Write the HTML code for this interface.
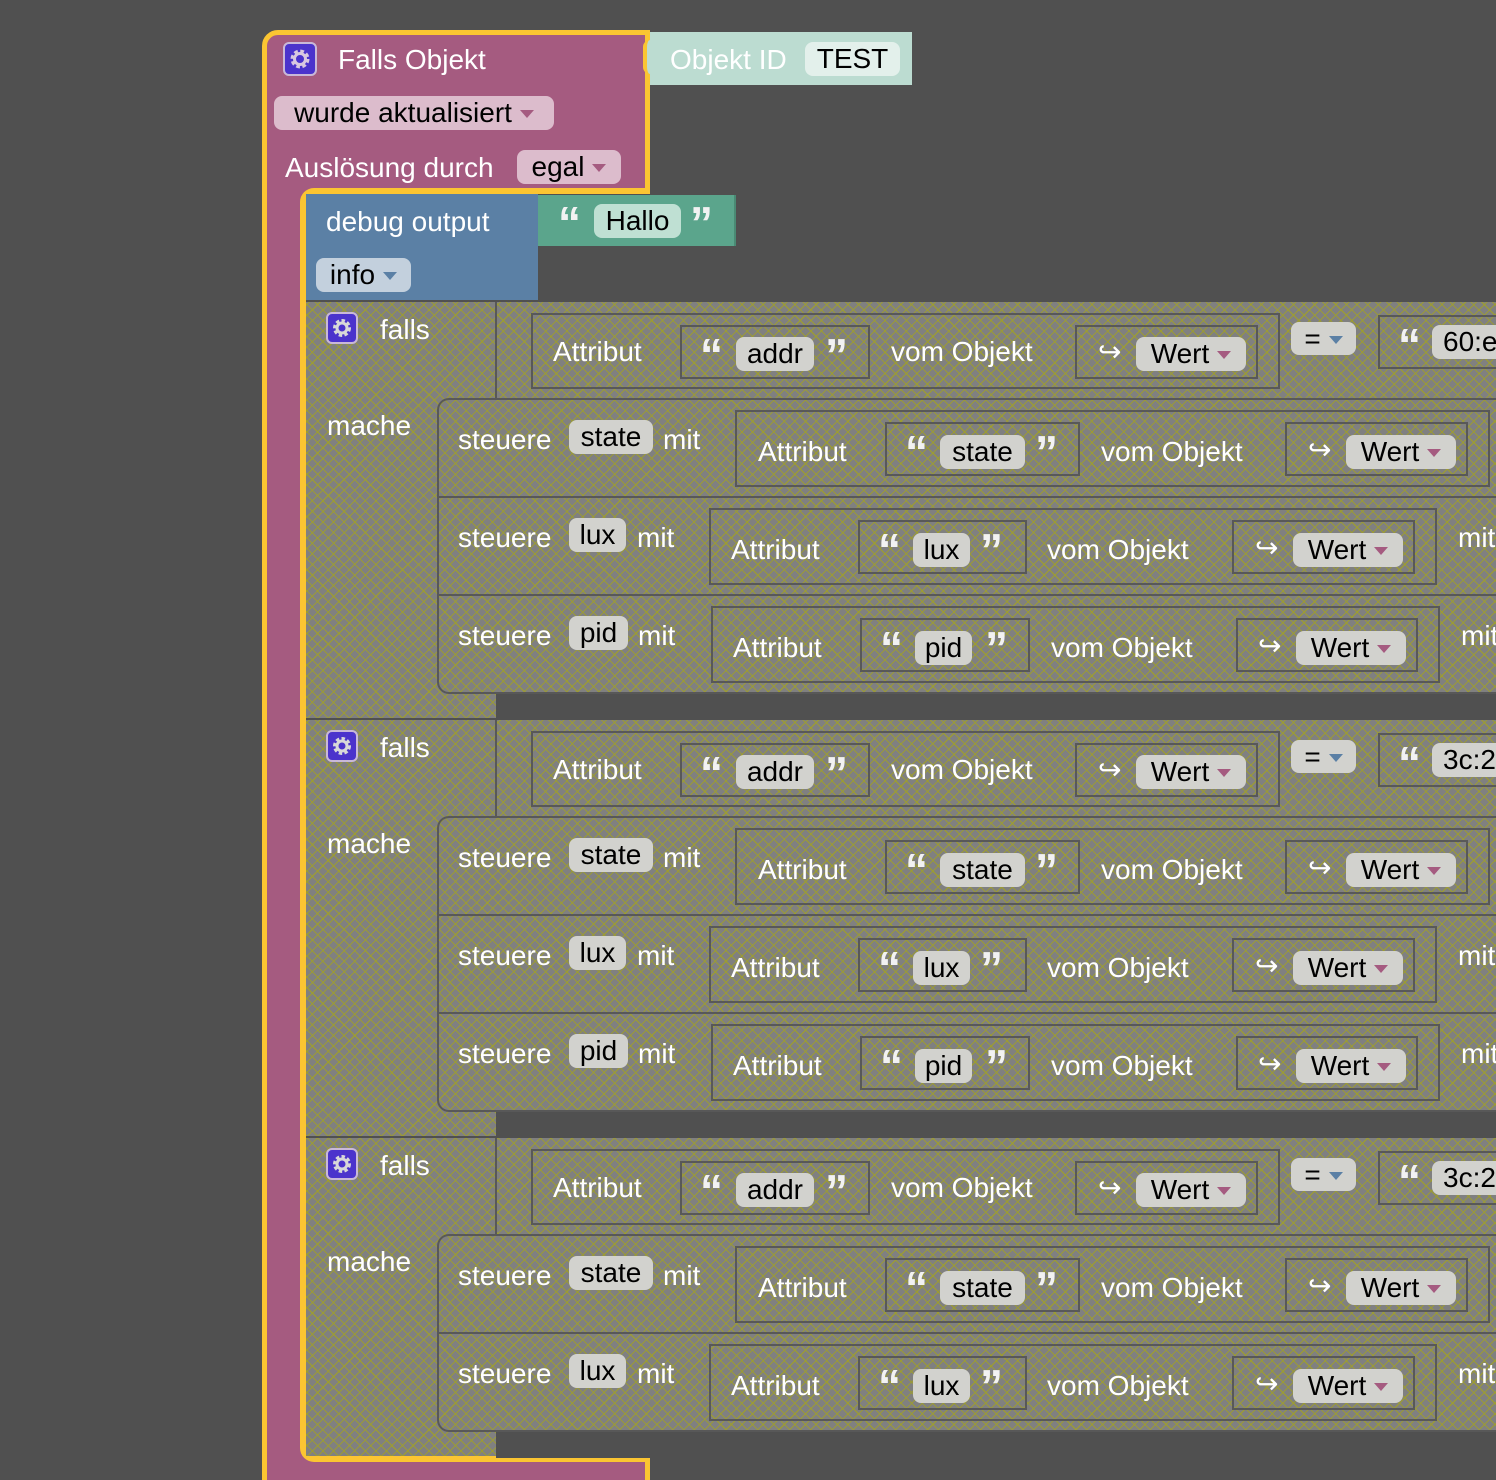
<!DOCTYPE html>
<html><head><meta charset="utf-8"><style>
*{margin:0;padding:0;box-sizing:border-box}
html,body{width:1496px;height:1480px;overflow:hidden}
body{background:#505050;position:relative;font-family:"Liberation Sans",sans-serif}
div,span.a{position:absolute}
.t{position:absolute;font-size:28px;line-height:34px;color:#fff;white-space:nowrap}
.p{position:absolute;height:34px;border-radius:8px;background:#d2d2ce;color:#000;font-size:28px;line-height:34px;text-align:center;white-space:nowrap}
.q{position:absolute;font-family:"Liberation Sans",sans-serif;font-weight:bold;font-size:46px;line-height:46px;color:#f2f2f2;letter-spacing:-2px}
.pat{background-color:#808080;background-image:repeating-linear-gradient(45deg,rgba(160,160,40,.8) 0 1.1px,transparent 1.1px 7.5px),repeating-linear-gradient(-45deg,rgba(160,160,40,.8) 0 1.1px,transparent 1.1px 7.5px)}
.bx{position:absolute;border:2px solid #585858}
.ln{position:absolute;background:#585858}
.dk{position:absolute;background:#505050}
.ar{display:inline-block;width:0;height:0;border-left:7px solid transparent;border-right:7px solid transparent;border-top:8px solid #a55b80;vertical-align:middle;margin-left:8px;margin-top:-2px}
.ab{border-top-color:#5b80a5}
.g{position:absolute;width:32px;height:32px;border-radius:6px;background:#4b33cc;border:2px solid #c9b8d8}
</style></head><body>

<!-- outer purple block -->
<div style="left:262px;top:30px;width:388px;height:1470px;background:#a55b80;border:5px solid #fbc532;border-top-left-radius:16px"></div>
<div style="left:300px;top:188px;width:350px;height:1274px;background:#505050;border:6px solid #fbc532;border-right:none;border-radius:14px 0 0 14px"></div>
<div class="g" style="left:283px;top:42px;width:34px;height:34px"><svg width="30" height="30" viewBox="0 0 30 30"><circle cx="15" cy="15" r="7" fill="none" stroke="#d8c8e0" stroke-width="5" stroke-dasharray="3.3 2.2"/><circle cx="15" cy="15" r="5.5" fill="none" stroke="#d8c8e0" stroke-width="3"/></svg></div>
<div class="t" style="left:338px;top:43px">Falls Objekt</div>
<div class="p" style="left:274px;top:96px;width:280px;background:#dcbccc">wurde aktualisiert<span class="ar"></span></div>
<div class="t" style="left:285px;top:151px">Auslösung durch</div>
<div class="p" style="left:517px;top:150px;width:104px;background:#dcbccc">egal<span class="ar"></span></div>

<!-- Objekt ID -->
<div style="left:650px;top:32px;width:262px;height:53px;background:#bcdcd1"></div>
<div style="left:643px;top:40px;width:14px;height:34px;background:#bcdcd1;border-radius:7px 0 0 7px;border-left:4px solid #fbc532"></div>
<div class="t" style="left:670px;top:43px">Objekt ID</div>
<div class="p" style="left:805px;top:42px;width:95px;background:#e3f0eb">TEST</div>

<!-- debug -->
<div style="left:306px;top:194px;width:232px;height:106px;background:#5b80a5"></div>
<div class="t" style="left:326px;top:205px">debug output</div>
<div class="p" style="left:316px;top:258px;width:95px;background:#c3d0dd">info<span class="ar ab"></span></div>
<div style="left:538px;top:195px;width:198px;height:51px;background:#5ba58c;border-right:2px solid #4a8a74"></div>
<div class="q" style="left:558px;top:200px">“</div>
<div class="p" style="left:594px;top:204px;width:87px;background:#bfe0d3">Hallo</div>
<div class="q" style="left:690px;top:200px">”</div>

<!-- GROUP 1 -->
<div class="pat" style="left:306px;top:302px;width:1190px;height:416px"></div>
<div class="dk" style="left:496px;top:692px;width:1000px;height:28px"></div>
<div class="ln" style="left:495px;top:302px;width:2px;height:96px"></div>
<div class="bx" style="left:437px;top:398px;width:1100px;height:296px;border-right:none;border-radius:12px 0 0 12px"></div>
<div class="ln" style="left:437px;top:496px;width:1059px;height:2px"></div>
<div class="ln" style="left:437px;top:594px;width:1059px;height:2px"></div>
<div class="g" style="left:326px;top:312px"><svg width="28" height="28" viewBox="0 0 28 28"><circle cx="14" cy="14" r="6.5" fill="none" stroke="#d8d8d8" stroke-width="5" stroke-dasharray="3 2"/><circle cx="14" cy="14" r="5" fill="none" stroke="#d8d8d8" stroke-width="3"/></svg></div>
<div class="t" style="left:380px;top:313px">falls</div>
<div class="t" style="left:327px;top:409px">mache</div>
<div class="bx" style="left:531px;top:313px;width:749px;height:76px"></div>
<div class="t" style="left:553px;top:335px">Attribut</div>
<div class="bx" style="left:680px;top:325px;width:190px;height:54px"></div>
<div class="q" style="left:700px;top:332px">“</div><div class="p" style="left:736px;top:337px;width:78px">addr</div><div class="q" style="left:825px;top:332px">”</div>
<div class="t" style="left:891px;top:335px">vom Objekt</div>
<div class="bx" style="left:1075px;top:325px;width:183px;height:54px"></div>
<div class="t" style="left:1098px;top:335px">↪</div><div class="p" style="left:1136px;top:337px;width:110px">Wert<span class="ar"></span></div>
<div class="p" style="left:1291px;top:322px;width:65px;height:33px;line-height:33px">=<span class="ar ab"></span></div>
<div class="bx" style="left:1378px;top:315px;width:200px;height:54px"></div>
<div class="q" style="left:1398px;top:322px">“</div><div class="p" style="left:1432px;top:325px;width:100px;text-align:left;padding-left:11px">60:e</div>
<!-- rows -->
<div class="t" style="left:458px;top:423px">steuere</div><div class="p" style="left:569px;top:420px;width:84px">state</div><div class="t" style="left:663px;top:423px">mit</div>
<div class="bx" style="left:735px;top:410px;width:755px;height:77px"></div>
<div class="t" style="left:758px;top:435px">Attribut</div>
<div class="bx" style="left:885px;top:422px;width:195px;height:54px"></div>
<div class="q" style="left:905px;top:429px">“</div><div class="p" style="left:940px;top:435px;width:85px">state</div><div class="q" style="left:1035px;top:429px">”</div>
<div class="t" style="left:1101px;top:435px">vom Objekt</div>
<div class="bx" style="left:1285px;top:422px;width:183px;height:54px"></div>
<div class="t" style="left:1308px;top:433px">↪</div><div class="p" style="left:1346px;top:435px;width:110px">Wert<span class="ar"></span></div>

<div class="t" style="left:458px;top:521px">steuere</div><div class="p" style="left:569px;top:518px;width:57px">lux</div><div class="t" style="left:637px;top:521px">mit</div>
<div class="bx" style="left:709px;top:508px;width:728px;height:77px"></div>
<div class="t" style="left:731px;top:533px">Attribut</div>
<div class="bx" style="left:858px;top:520px;width:169px;height:54px"></div>
<div class="q" style="left:878px;top:527px">“</div><div class="p" style="left:913px;top:533px;width:57px">lux</div><div class="q" style="left:980px;top:527px">”</div>
<div class="t" style="left:1047px;top:533px">vom Objekt</div>
<div class="bx" style="left:1232px;top:520px;width:183px;height:54px"></div>
<div class="t" style="left:1255px;top:531px">↪</div><div class="p" style="left:1293px;top:533px;width:110px">Wert<span class="ar"></span></div>
<div class="t" style="left:1458px;top:521px">mit</div>

<div class="t" style="left:458px;top:619px">steuere</div><div class="p" style="left:569px;top:616px;width:59px">pid</div><div class="t" style="left:638px;top:619px">mit</div>
<div class="bx" style="left:711px;top:606px;width:729px;height:77px"></div>
<div class="t" style="left:733px;top:631px">Attribut</div>
<div class="bx" style="left:860px;top:618px;width:170px;height:54px"></div>
<div class="q" style="left:880px;top:625px">“</div><div class="p" style="left:915px;top:631px;width:57px">pid</div><div class="q" style="left:985px;top:625px">”</div>
<div class="t" style="left:1051px;top:631px">vom Objekt</div>
<div class="bx" style="left:1236px;top:618px;width:182px;height:54px"></div>
<div class="t" style="left:1258px;top:629px">↪</div><div class="p" style="left:1296px;top:631px;width:110px">Wert<span class="ar"></span></div>
<div class="t" style="left:1461px;top:619px">mit</div>

<!-- GROUP 2 -->
<div class="pat" style="left:306px;top:720px;width:1190px;height:416px"></div>
<div class="dk" style="left:496px;top:1110px;width:1000px;height:28px"></div>
<div class="ln" style="left:495px;top:720px;width:2px;height:96px"></div>
<div class="bx" style="left:437px;top:816px;width:1100px;height:296px;border-right:none;border-radius:12px 0 0 12px"></div>
<div class="ln" style="left:437px;top:914px;width:1059px;height:2px"></div>
<div class="ln" style="left:437px;top:1012px;width:1059px;height:2px"></div>
<div class="g" style="left:326px;top:730px"><svg width="28" height="28" viewBox="0 0 28 28"><circle cx="14" cy="14" r="6.5" fill="none" stroke="#d8d8d8" stroke-width="5" stroke-dasharray="3 2"/><circle cx="14" cy="14" r="5" fill="none" stroke="#d8d8d8" stroke-width="3"/></svg></div>
<div class="t" style="left:380px;top:731px">falls</div>
<div class="t" style="left:327px;top:827px">mache</div>
<div class="bx" style="left:531px;top:731px;width:749px;height:76px"></div>
<div class="t" style="left:553px;top:753px">Attribut</div>
<div class="bx" style="left:680px;top:743px;width:190px;height:54px"></div>
<div class="q" style="left:700px;top:750px">“</div><div class="p" style="left:736px;top:755px;width:78px">addr</div><div class="q" style="left:825px;top:750px">”</div>
<div class="t" style="left:891px;top:753px">vom Objekt</div>
<div class="bx" style="left:1075px;top:743px;width:183px;height:54px"></div>
<div class="t" style="left:1098px;top:753px">↪</div><div class="p" style="left:1136px;top:755px;width:110px">Wert<span class="ar"></span></div>
<div class="p" style="left:1291px;top:740px;width:65px;height:33px;line-height:33px">=<span class="ar ab"></span></div>
<div class="bx" style="left:1378px;top:733px;width:200px;height:54px"></div>
<div class="q" style="left:1398px;top:740px">“</div><div class="p" style="left:1432px;top:743px;width:100px;text-align:left;padding-left:11px">3c:2</div>

<div class="t" style="left:458px;top:841px">steuere</div><div class="p" style="left:569px;top:838px;width:84px">state</div><div class="t" style="left:663px;top:841px">mit</div>
<div class="bx" style="left:735px;top:828px;width:755px;height:77px"></div>
<div class="t" style="left:758px;top:853px">Attribut</div>
<div class="bx" style="left:885px;top:840px;width:195px;height:54px"></div>
<div class="q" style="left:905px;top:847px">“</div><div class="p" style="left:940px;top:853px;width:85px">state</div><div class="q" style="left:1035px;top:847px">”</div>
<div class="t" style="left:1101px;top:853px">vom Objekt</div>
<div class="bx" style="left:1285px;top:840px;width:183px;height:54px"></div>
<div class="t" style="left:1308px;top:851px">↪</div><div class="p" style="left:1346px;top:853px;width:110px">Wert<span class="ar"></span></div>

<div class="t" style="left:458px;top:939px">steuere</div><div class="p" style="left:569px;top:936px;width:57px">lux</div><div class="t" style="left:637px;top:939px">mit</div>
<div class="bx" style="left:709px;top:926px;width:728px;height:77px"></div>
<div class="t" style="left:731px;top:951px">Attribut</div>
<div class="bx" style="left:858px;top:938px;width:169px;height:54px"></div>
<div class="q" style="left:878px;top:945px">“</div><div class="p" style="left:913px;top:951px;width:57px">lux</div><div class="q" style="left:980px;top:945px">”</div>
<div class="t" style="left:1047px;top:951px">vom Objekt</div>
<div class="bx" style="left:1232px;top:938px;width:183px;height:54px"></div>
<div class="t" style="left:1255px;top:949px">↪</div><div class="p" style="left:1293px;top:951px;width:110px">Wert<span class="ar"></span></div>
<div class="t" style="left:1458px;top:939px">mit</div>

<div class="t" style="left:458px;top:1037px">steuere</div><div class="p" style="left:569px;top:1034px;width:59px">pid</div><div class="t" style="left:638px;top:1037px">mit</div>
<div class="bx" style="left:711px;top:1024px;width:729px;height:77px"></div>
<div class="t" style="left:733px;top:1049px">Attribut</div>
<div class="bx" style="left:860px;top:1036px;width:170px;height:54px"></div>
<div class="q" style="left:880px;top:1043px">“</div><div class="p" style="left:915px;top:1049px;width:57px">pid</div><div class="q" style="left:985px;top:1043px">”</div>
<div class="t" style="left:1051px;top:1049px">vom Objekt</div>
<div class="bx" style="left:1236px;top:1036px;width:182px;height:54px"></div>
<div class="t" style="left:1258px;top:1047px">↪</div><div class="p" style="left:1296px;top:1049px;width:110px">Wert<span class="ar"></span></div>
<div class="t" style="left:1461px;top:1037px">mit</div>

<!-- GROUP 3 -->
<div class="pat" style="left:306px;top:1138px;width:1190px;height:318px"></div>
<div class="dk" style="left:496px;top:1430px;width:1000px;height:28px"></div>
<div class="ln" style="left:495px;top:1138px;width:2px;height:96px"></div>
<div class="bx" style="left:437px;top:1234px;width:1100px;height:198px;border-right:none;border-radius:12px 0 0 12px"></div>
<div class="ln" style="left:437px;top:1332px;width:1059px;height:2px"></div>
<div class="g" style="left:326px;top:1148px"><svg width="28" height="28" viewBox="0 0 28 28"><circle cx="14" cy="14" r="6.5" fill="none" stroke="#d8d8d8" stroke-width="5" stroke-dasharray="3 2"/><circle cx="14" cy="14" r="5" fill="none" stroke="#d8d8d8" stroke-width="3"/></svg></div>
<div class="t" style="left:380px;top:1149px">falls</div>
<div class="t" style="left:327px;top:1245px">mache</div>
<div class="bx" style="left:531px;top:1149px;width:749px;height:76px"></div>
<div class="t" style="left:553px;top:1171px">Attribut</div>
<div class="bx" style="left:680px;top:1161px;width:190px;height:54px"></div>
<div class="q" style="left:700px;top:1168px">“</div><div class="p" style="left:736px;top:1173px;width:78px">addr</div><div class="q" style="left:825px;top:1168px">”</div>
<div class="t" style="left:891px;top:1171px">vom Objekt</div>
<div class="bx" style="left:1075px;top:1161px;width:183px;height:54px"></div>
<div class="t" style="left:1098px;top:1171px">↪</div><div class="p" style="left:1136px;top:1173px;width:110px">Wert<span class="ar"></span></div>
<div class="p" style="left:1291px;top:1158px;width:65px;height:33px;line-height:33px">=<span class="ar ab"></span></div>
<div class="bx" style="left:1378px;top:1151px;width:200px;height:54px"></div>
<div class="q" style="left:1398px;top:1158px">“</div><div class="p" style="left:1432px;top:1161px;width:100px;text-align:left;padding-left:11px">3c:2</div>

<div class="t" style="left:458px;top:1259px">steuere</div><div class="p" style="left:569px;top:1256px;width:84px">state</div><div class="t" style="left:663px;top:1259px">mit</div>
<div class="bx" style="left:735px;top:1246px;width:755px;height:77px"></div>
<div class="t" style="left:758px;top:1271px">Attribut</div>
<div class="bx" style="left:885px;top:1258px;width:195px;height:54px"></div>
<div class="q" style="left:905px;top:1265px">“</div><div class="p" style="left:940px;top:1271px;width:85px">state</div><div class="q" style="left:1035px;top:1265px">”</div>
<div class="t" style="left:1101px;top:1271px">vom Objekt</div>
<div class="bx" style="left:1285px;top:1258px;width:183px;height:54px"></div>
<div class="t" style="left:1308px;top:1269px">↪</div><div class="p" style="left:1346px;top:1271px;width:110px">Wert<span class="ar"></span></div>

<div class="t" style="left:458px;top:1357px">steuere</div><div class="p" style="left:569px;top:1354px;width:57px">lux</div><div class="t" style="left:637px;top:1357px">mit</div>
<div class="bx" style="left:709px;top:1344px;width:728px;height:77px"></div>
<div class="t" style="left:731px;top:1369px">Attribut</div>
<div class="bx" style="left:858px;top:1356px;width:169px;height:54px"></div>
<div class="q" style="left:878px;top:1363px">“</div><div class="p" style="left:913px;top:1369px;width:57px">lux</div><div class="q" style="left:980px;top:1363px">”</div>
<div class="t" style="left:1047px;top:1369px">vom Objekt</div>
<div class="bx" style="left:1232px;top:1356px;width:183px;height:54px"></div>
<div class="t" style="left:1255px;top:1367px">↪</div><div class="p" style="left:1293px;top:1369px;width:110px">Wert<span class="ar"></span></div>
<div class="t" style="left:1458px;top:1357px">mit</div>

</body></html>
